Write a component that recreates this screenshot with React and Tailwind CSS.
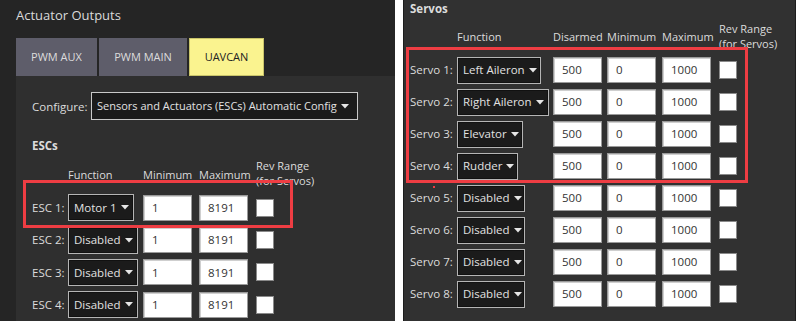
import React from "react";

const FONT = "font-['Open_Sans','DejaVu_Sans',sans-serif]";

function Caret() {
  return (
    <svg width="8" height="5" viewBox="0 0 8 5" className="shrink-0">
      <path d="M0 0 H8 L4 4.5 Z" fill="#e6e6e6" />
    </svg>
  );
}

function Select({ label, w }) {
  return (
    <div
      className={`flex h-[27px] items-center justify-between gap-1 border border-[#b5b5b5] bg-[#1b1b1b] pl-[5px] pr-[6px] text-[11.5px] text-[#e2e2e2] shadow-[inset_0_0_0_1px_#111] ${w}`}
    >
      <span className="whitespace-nowrap">{label}</span>
      <Caret />
    </div>
  );
}

function Input({ value }) {
  return (
    <div className="flex h-[26px] w-[49px] items-center border border-[#9a9a9a] bg-white pl-[8px] text-[11.5px] text-[#333] shadow-[inset_1px_1px_0_#cfcfcf]">
      {value}
    </div>
  );
}

function Check() {
  return <div className="h-[18px] w-[18px] border border-[#8a8a8a] bg-white" />;
}

const escs = [
  { n: 1, f: "Motor 1", w: "w-[66px]" },
  { n: 2, f: "Disabled", w: "w-[70px]" },
  { n: 3, f: "Disabled", w: "w-[70px]" },
  { n: 4, f: "Disabled", w: "w-[70px]" },
];

const servos = [
  { n: 1, f: "Left Aileron", w: "w-[84px]" },
  { n: 2, f: "Right Aileron", w: "w-[92px]" },
  { n: 3, f: "Elevator", w: "w-[66px]" },
  { n: 4, f: "Rudder", w: "w-[61px]" },
  { n: 5, f: "Disabled", w: "w-[68px]" },
  { n: 6, f: "Disabled", w: "w-[68px]" },
  { n: 7, f: "Disabled", w: "w-[68px]" },
  { n: 8, f: "Disabled", w: "w-[68px]" },
];

export default function App() {
  return (
    <div className={`flex h-[321px] w-[796px] overflow-hidden bg-white ${FONT}`}>
      {/* Left panel */}
      <div className="flex w-[395px] shrink-0 flex-col bg-[#252525] pl-4">
        <div className="h-[40px] pt-[6px] text-[13px] leading-[18px] text-[#dadada]">Actuator Outputs</div>
        <div className="flex h-[41px] gap-[2px] text-[11px]">
          <div className="flex w-[81px] items-center justify-center bg-[#5e5d6a] text-[#dcdcdc]">PWM AUX</div>
          <div className="flex w-[88px] items-center justify-center bg-[#5e5d6a] text-[#dcdcdc]">PWM MAIN</div>
          <div className="flex w-[75px] items-center justify-center border border-[#c9c46a] bg-[#faf38f] text-[#222]">UAVCAN</div>
        </div>
        <div className="relative flex-1 bg-[#2f2f2f] pl-4 pt-4 text-[11.5px] text-[#dcdcdc]">
          <div className="flex h-[28px] items-center">
            <span className="w-[59px]">Configure:</span>
            <div className="flex h-[28px] w-[267px] items-center justify-between border border-[#c8c8c8] bg-[#1b1b1b] pl-[5px] pr-[8px] text-[11px] text-[#e2e2e2]">
              <span className="whitespace-nowrap">Sensors and Actuators (ESCs) Automatic Config</span>
              <Caret />
            </div>
          </div>
          <div className="mt-[18px] h-[16px] font-bold leading-[16px]">ESCs</div>
          <div className="mt-[3px] grid h-[32px] grid-cols-[36px_75px_56px_57px_70px] items-end text-[11px] leading-[15px]">
            <span />
            <span className="mb-[7px]">Function</span>
            <span className="mb-[7px]">Minimum</span>
            <span className="mb-[7px]">Maximum</span>
            <span className="mb-[1px] whitespace-nowrap">
              Rev Range
              <br />
              (for Servos)
            </span>
          </div>
          <div className="mt-[2px]">
            {escs.map((e) => (
              <div key={e.n} className="grid h-[32.4px] grid-cols-[36px_75px_56px_57px_70px] items-center">
                <span className="whitespace-nowrap">ESC {e.n}:</span>
                <Select label={e.f} w={e.w} />
                <Input value="1" />
                <Input value="8191" />
                <Check />
              </div>
            ))}
          </div>
          <div className="absolute left-[7px] top-[104px] h-[48px] w-[270px] border-[3px] border-[#ee3d43]" />
        </div>
      </div>

      {/* gap */}
      <div className="w-[8px] shrink-0 bg-white" />

      {/* Right panel */}
      <div className="relative flex flex-1 flex-col border-x border-[#1d1d1d] bg-[#313131] pl-[6px] text-[11.5px] text-[#dcdcdc]">
        <div className="h-[18px] pt-[1px] font-bold leading-[16px]">Servos</div>
        <div className="mt-[1px] grid h-[34px] grid-cols-[47px_96px_54px_55px_57px_70px] items-end text-[11px] leading-[15px]">
          <span />
          <span className="mb-[9px]">Function</span>
          <span className="mb-[9px]">Disarmed</span>
          <span className="mb-[9px]">Minimum</span>
          <span className="mb-[9px]">Maximum</span>
          <span className="mb-[2px] whitespace-nowrap">
            Rev Range
            <br />
            (for Servos)
          </span>
        </div>
        <div className="mt-[1px]">
          {servos.map((s) => (
            <div key={s.n} className="grid h-[32px] grid-cols-[47px_96px_54px_55px_57px_70px] items-center">
              <span className="whitespace-nowrap">Servo {s.n}:</span>
              <Select label={s.f} w={s.w} />
              <Input value="500" />
              <Input value="0" />
              <Input value="1000" />
              <Check />
            </div>
          ))}
        </div>
        <div className="absolute left-[2px] top-[47px] h-[136px] w-[342px] border-[3px] border-[#ee3d43]" />
        <div className="absolute left-[29px] top-[186px] h-[2px] w-[2px] bg-[#ee3d43]" />
      </div>
    </div>
  );
}
